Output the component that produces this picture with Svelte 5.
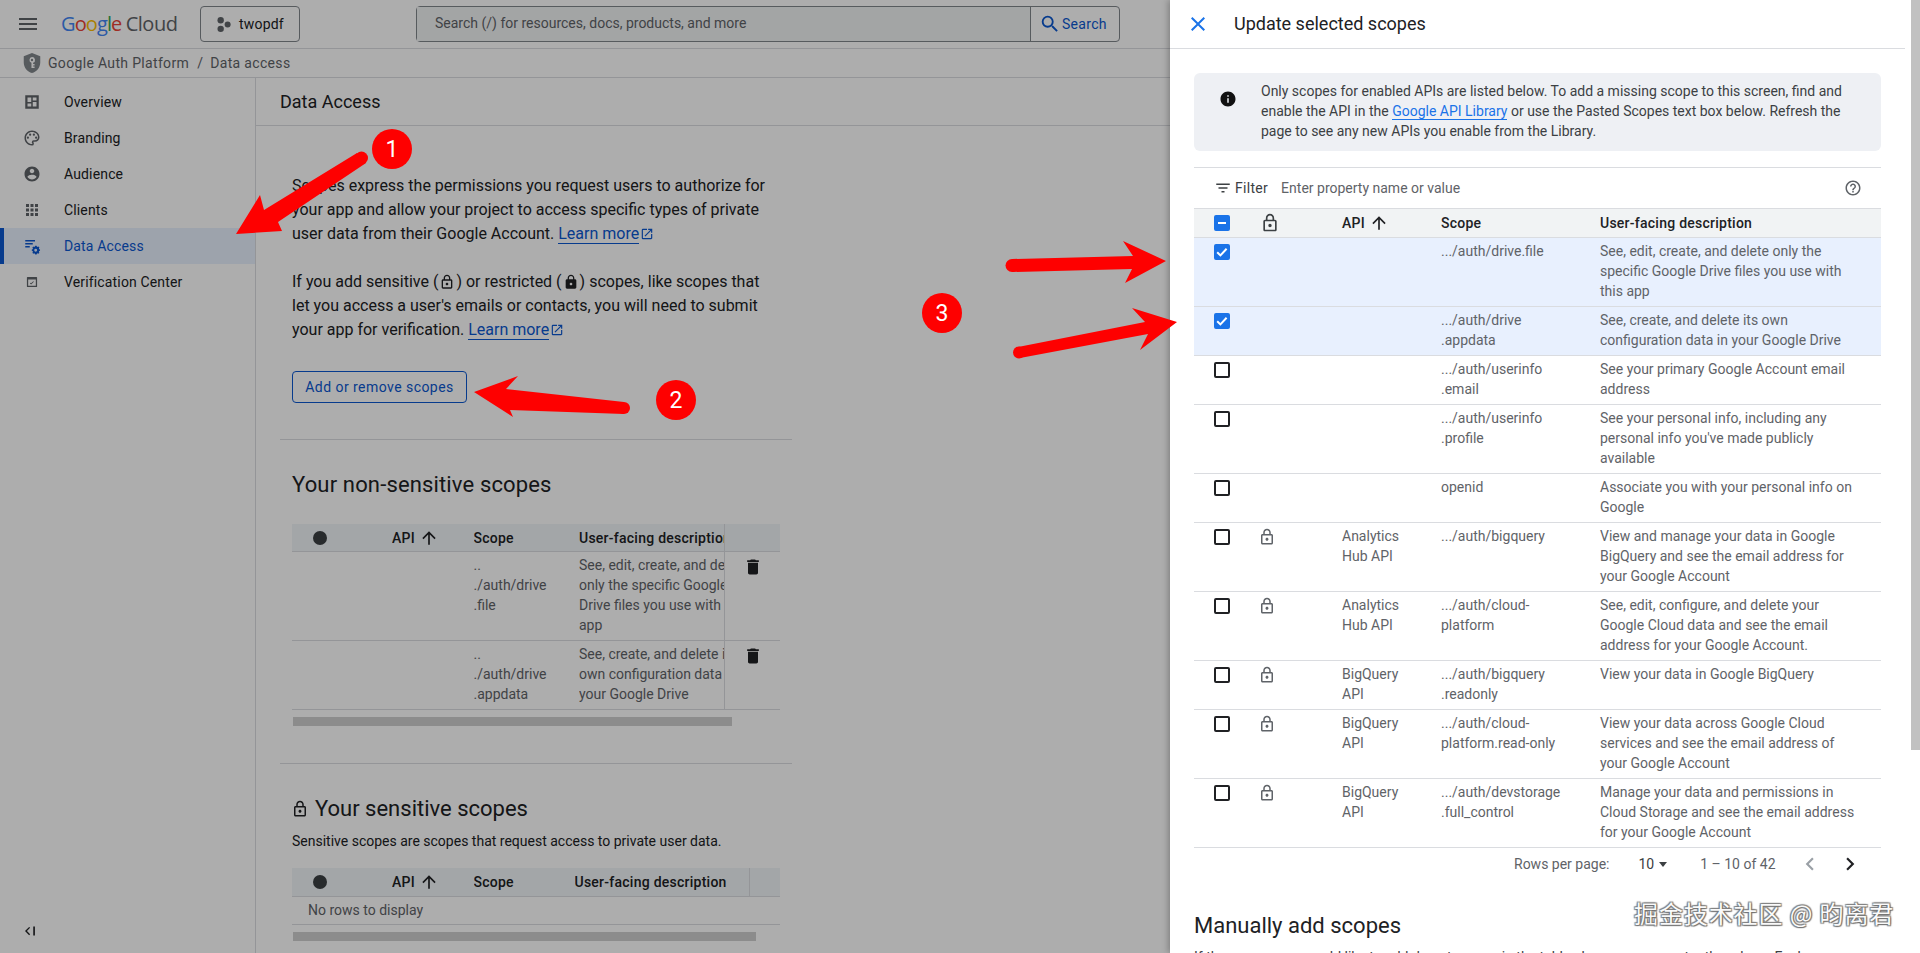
<script>
  const P = {
    menu: 'M3 18h18v-2H3v2zm0-5h18v-2H3v2zm0-7v2h18V6H3z',
    search: 'M15.5 14h-.79l-.28-.27A6.471 6.471 0 0 0 16 9.5 6.5 6.5 0 1 0 9.5 16c1.61 0 3.09-.59 4.23-1.57l.27.28v.79l5 4.99L20.49 19l-4.99-5zm-6 0C7.01 14 5 11.99 5 9.5S7.01 5 9.5 5 14 7.01 14 9.5 11.99 14 9.5 14z',
    close: 'M19 6.41L17.59 5 12 10.59 6.41 5 5 6.41 10.59 12 5 17.59 6.41 19 12 13.41 17.59 19 19 17.59 13.41 12z',
    info: 'M12 2C6.48 2 2 6.48 2 12s4.48 10 10 10 10-4.48 10-10S17.52 2 12 2zm1 15h-2v-6h2v6zm0-8h-2V7h2v2z',
    filter: 'M10 18h4v-2h-4v2zM3 6v2h18V6H3zm3 7h12v-2H6v2z',
    help: 'M11 18h2v-2h-2v2zm1-16C6.48 2 2 6.48 2 12s4.48 10 10 10 10-4.48 10-10S17.52 2 12 2zm0 18c-4.41 0-8-3.59-8-8s3.59-8 8-8 8 3.59 8 8-3.59 8-8 8zm0-14c-2.21 0-4 1.79-4 4h2c0-1.1.9-2 2-2s2 .9 2 2c0 2-3 1.75-3 5h2c0-2.25 3-2.5 3-5 0-2.21-1.79-4-4-4z',
    lock: 'M18 8h-1V6c0-2.76-2.24-5-5-5S7 3.24 7 6v2H6c-1.1 0-2 .9-2 2v10c0 1.1.9 2 2 2h12c1.1 0 2-.9 2-2V10c0-1.1-.9-2-2-2zM9 6c0-1.66 1.34-3 3-3s3 1.34 3 3v2H9V6zm9 14H6V10h12v10zm-6-3c1.1 0 2-.9 2-2s-.9-2-2-2-2 .9-2 2 .9 2 2 2z',
    lockFill: 'M18 8h-1V6c0-2.76-2.24-5-5-5S7 3.24 7 6v2H6c-1.1 0-2 .9-2 2v10c0 1.1.9 2 2 2h12c1.1 0 2-.9 2-2V10c0-1.1-.9-2-2-2zm-6 9c-1.1 0-2-.9-2-2s.9-2 2-2 2 .9 2 2-.9 2-2 2zm3.1-9H8.9V6c0-1.71 1.39-3.1 3.1-3.1 1.71 0 3.1 1.39 3.1 3.1v2z',
    up: 'M4 12l1.41 1.41L11 7.83V20h2V7.83l5.58 5.59L20 12l-8-8-8 8z',
    trash: 'M6 19c0 1.1.9 2 2 2h8c1.1 0 2-.9 2-2V7H6v12zM19 4h-3.5l-1-1h-5l-1 1H5v2h14V4z',
    prev: 'M15.41 7.41L14 6l-6 6 6 6 1.41-1.41L10.83 12z',
    next: 'M10 6L8.59 7.41 13.17 12l-4.58 4.59L10 18l6-6z',
    ext: 'M19 19H5V5h7V3H5a2 2 0 0 0-2 2v14a2 2 0 0 0 2 2h14c1.1 0 2-.9 2-2v-7h-2v7zM14 3v2h3.59l-9.83 9.83 1.41 1.41L19 6.41V10h2V3h-7z',
    overview: 'M3 3h18v18H3V3zm3 3v6h5V6H6zm7 0v4h5V6h-5zm0 6v6h5v-6h-5zM6 14v4h5v-4H6z',
    palette: 'M12 22C6.49 22 2 17.51 2 12S6.49 2 12 2s10 4.04 10 9c0 3.31-2.69 6-6 6h-1.77c-.28 0-.5.22-.5.5 0 .12.05.23.13.33.41.47.64 1.06.64 1.67A2.5 2.5 0 0 1 12 22zm0-18c-4.41 0-8 3.59-8 8s3.59 8 8 8c.28 0 .5-.22.5-.5a.54.54 0 0 0-.14-.35c-.41-.46-.63-1.05-.63-1.65a2.5 2.5 0 0 1 2.5-2.5H16c2.21 0 4-1.79 4-4 0-3.86-3.59-7-8-7zM6.5 10a1.5 1.5 0 1 0 0 3 1.5 1.5 0 0 0 0-3zm3-4a1.5 1.5 0 1 0 0 3 1.5 1.5 0 0 0 0-3zm5 0a1.5 1.5 0 1 0 0 3 1.5 1.5 0 0 0 0-3zm3 4a1.5 1.5 0 1 0 0 3 1.5 1.5 0 0 0 0-3z',
    account: 'M12 2C6.48 2 2 6.48 2 12s4.48 10 10 10 10-4.48 10-10S17.52 2 12 2zm0 3c1.66 0 3 1.34 3 3s-1.34 3-3 3-3-1.34-3-3 1.34-3 3-3zm0 14.2c-2.5 0-4.71-1.28-6-3.22.03-1.99 4-3.08 6-3.08 1.99 0 5.97 1.09 6 3.08-1.29 1.94-3.5 3.22-6 3.22z',
    apps: 'M4 4h4v4H4zm6 0h4v4h-4zm6 0h4v4h-4zM4 10h4v4H4zm6 0h4v4h-4zm6 0h4v4h-4zM4 16h4v4H4zm6 0h4v4h-4zm6 0h4v4h-4z',
    access: 'M3 4h13v2H3zm0 4h10v2H3zm0 4h6v2H3zM17 11.5l1.1.1.4 1.2 1.1.5 1.1-.6 1.2 1.3-.7 1 .3 1.2 1.2.4v1.8l-1.2.4-.3 1.2.7 1-1.2 1.3-1.1-.6-1.1.5-.4 1.2h-1.8l-.4-1.2-1.1-.5-1.1.6-1.2-1.3.7-1-.3-1.2-1.2-.4v-1.8l1.2-.4.3-1.2-.7-1 1.2-1.3 1.1.6 1.1-.5.4-1.2zm-.1 4.3a1.9 1.9 0 1 0 0 3.8 1.9 1.9 0 0 0 0-3.8z',
    verify: 'M5 4h14a1 1 0 0 1 1 1v14a1 1 0 0 1-1 1H5a1 1 0 0 1-1-1V5a1 1 0 0 1 1-1zm1 4v10h12V8H6zm4.6 7.9l-2-2 .9-.9 1.1 1.1 3.4-3.4.9.9-4.3 4.3z',
    shield: 'M12 1L3 4.5v7C3 17 6.8 21.6 12 23c5.2-1.4 9-6 9-11.5v-7L12 1zm0 4.5a3.2 3.2 0 0 1 1.2 6.2V13h1.6v1.6h-1.6v1.2h1.6v1.6h-3.4v-5.7A3.2 3.2 0 0 1 12 5.5zm0 1.9a1.3 1.3 0 1 0 0 2.6 1.3 1.3 0 0 0 0-2.6z',
    collapse: 'M9.5 6.5L4 12l5.5 5.5 1.3-1.3L6.6 12l4.2-4.2zM15 6h2.2v12H15z'
  };

  const nav = [
    { label: 'Overview', icon: 'overview' },
    { label: 'Branding', icon: 'palette' },
    { label: 'Audience', icon: 'account' },
    { label: 'Clients', icon: 'apps' },
    { label: 'Data Access', icon: 'access', active: true },
    { label: 'Verification Center', icon: 'verify', small: true }
  ];

  const scopes = [
    { state: 'on', scope: '.../auth/drive.file', desc: 'See, edit, create, and delete only the\nspecific Google Drive files you use with\nthis app' },
    { state: 'on', scope: '.../auth/drive\n.appdata', desc: 'See, create, and delete its own\nconfiguration data in your Google Drive' },
    { scope: '.../auth/userinfo\n.email', desc: 'See your primary Google Account email\naddress' },
    { scope: '.../auth/userinfo\n.profile', desc: "See your personal info, including any\npersonal info you've made publicly\navailable" },
    { scope: 'openid', desc: 'Associate you with your personal info on\nGoogle' },
    { lock: true, api: 'Analytics\nHub API', scope: '.../auth/bigquery', desc: 'View and manage your data in Google\nBigQuery and see the email address for\nyour Google Account' },
    { lock: true, api: 'Analytics\nHub API', scope: '.../auth/cloud-\nplatform', desc: 'See, edit, configure, and delete your\nGoogle Cloud data and see the email\naddress for your Google Account.' },
    { lock: true, api: 'BigQuery\nAPI', scope: '.../auth/bigquery\n.readonly', desc: 'View your data in Google BigQuery' },
    { lock: true, api: 'BigQuery\nAPI', scope: '.../auth/cloud-\nplatform.read-only', desc: 'View your data across Google Cloud\nservices and see the email address of\nyour Google Account' },
    { lock: true, api: 'BigQuery\nAPI', scope: '.../auth/devstorage\n.full_control', desc: 'Manage your data and permissions in\nCloud Storage and see the email address\nfor your Google Account' }
  ];

  const chosen = [
    { scope: '..\n./auth/drive\n.file', desc: 'See, edit, create, and delete\nonly the specific Google\nDrive files you use with this\napp' },
    { scope: '..\n./auth/drive\n.appdata', desc: 'See, create, and delete its\nown configuration data in\nyour Google Drive' }
  ];

  const arrows = [
    { pts: '236,234 260,195 264,210 357,153 366,163 278,222 282,231', x: 361.5, y: 158, r: 6.5 },
    { pts: '474,392 518,376 506,389 624,402 624,414 510,410 513,417', x: 624, y: 408, r: 6 },
    { pts: '1166,261 1123,241 1133,256 1012,259 1012,272 1132,269 1125,283', x: 1012, y: 265.5, r: 6.5 },
    { pts: '1177,322 1132,308 1145,322 1018,347 1020,358 1148,334 1140,350', x: 1019, y: 352.5, r: 6 }
  ];

  const marks = [
    { n: 1, x: 392, y: 149 },
    { n: 2, x: 676, y: 400 },
    { n: 3, x: 942, y: 313 }
  ];
</script>

{#snippet icon(name, cls)}
  <svg class={cls} viewBox="0 0 24 24" aria-hidden="true"><path d={P[name]} /></svg>
{/snippet}

{#snippet leftHead(wide)}
  <div class="lrow lhead" class:wide>
    <span class="dot"></span>
    <span class="lapi">API {@render icon('up', 'sort')}</span>
    <span class="lscope">Scope</span>
    <span class="ldesc">User-facing description</span>
    <span class="lact"></span>
  </div>
{/snippet}

<div class="page">
  <header class="top">
    {@render icon('menu', 'burger')}
    <div class="logo">
      <span class="g1">G</span><span class="g2">o</span><span class="g3">o</span><span class="g1">g</span><span class="g4">l</span><span class="g2">e</span>
      <span class="cloud">Cloud</span>
    </div>
    <button class="project">
      <svg class="dots" viewBox="0 0 16 16" aria-hidden="true"><circle cx="5" cy="3.4" r="3.4" /><circle cx="5" cy="12.6" r="3.4" /><circle cx="12.4" cy="8" r="3.2" /></svg>
      twopdf
    </button>
    <div class="search">
      <span class="sinput">Search (/) for resources, docs, products, and more</span>
      <span class="sbtn">{@render icon('search', 'sicon')}Search</span>
    </div>
  </header>

  <div class="crumb">
    {@render icon('shield', 'shield')}
    <span>Google Auth Platform</span>
    <span class="sep">/</span>
    <span>Data access</span>
  </div>

  <div class="body">
    <nav class="side">
      {#each nav as n}
        <div class="item" class:active={n.active}>
          {@render icon(n.icon, n.small ? 'nicon small' : 'nicon')}
          <span>{n.label}</span>
        </div>
      {/each}
      {@render icon('collapse', 'collapse')}
    </nav>

    <main class="main">
      <h1 class="mtitle">Data Access</h1>
      <div class="content">
        <p class="para">Scopes express the permissions you request users to authorize for<br />your app and allow your project to access specific types of private<br />user data from their Google Account. <a href="#a">Learn more</a>{@render icon('ext', 'ext')}</p>
        <p class="para second">If you add sensitive ({@render icon('lock', 'inl')}) or restricted ({@render icon('lockFill', 'inl')}) scopes, like scopes that<br />let you access a user's emails or contacts, you will need to submit<br />your app for verification. <a href="#a">Learn more</a>{@render icon('ext', 'ext')}</p>
        <button class="addbtn">Add or remove scopes</button>
        <hr class="rule r1" />
        <h2 class="h2">Your non-sensitive scopes</h2>
        <div class="ltable">
          {@render leftHead(false)}
          {#each chosen as c}
            <div class="lrow">
              <span></span>
              <span></span>
              <span class="lscope pre">{c.scope}</span>
              <span class="ldesc pre">{c.desc}</span>
              <span class="lact">{@render icon('trash', 'trash')}</span>
            </div>
          {/each}
        </div>
        <div class="hscroll s1"></div>
        <hr class="rule r2" />
        <h2 class="h2 locked">{@render icon('lock', 'hlock')}Your sensitive scopes</h2>
        <p class="sub">Sensitive scopes are scopes that request access to private user data.</p>
        <div class="ltable">
          {@render leftHead(true)}
          <div class="norows">No rows to display</div>
        </div>
        <div class="hscroll s2"></div>
      </div>
    </main>
  </div>
</div>

<div class="scrim"></div>

<aside class="panel">
  <div class="pmain">
    <div class="phead">
      {@render icon('close', 'pclose')}
      <span>Update selected scopes</span>
    </div>
    <div class="pbody">
      <div class="note">
        {@render icon('info', 'ninfo')}
        <p>Only scopes for enabled APIs are listed below. To add a missing scope to this screen, find and<br />enable the API in the <a href="#a">Google API Library</a> or use the Pasted Scopes text box below. Refresh the<br />page to see any new APIs you enable from the Library.</p>
      </div>
      <div class="filter">
        {@render icon('filter', 'ficon')}
        <span class="flabel">Filter</span>
        <span class="fhint">Enter property name or value</span>
        {@render icon('help', 'fhelp')}
      </div>
      <div class="grid ghead">
        <span class="cb mixed"></span>
        <span class="gl">{@render icon('lock', 'glock head')}</span>
        <span class="api">API {@render icon('up', 'sort')}</span>
        <span>Scope</span>
        <span>User-facing description</span>
      </div>
      {#each scopes as r}
        <div class="grid grow" class:sel={r.state === 'on'}>
          <span class="cb" class:on={r.state === 'on'}>
            {#if r.state === 'on'}
              <svg viewBox="0 0 16 16" aria-hidden="true"><path d="M3.2 8.2l3.2 3.2 6.2-6.6" /></svg>
            {/if}
          </span>
          <span class="gl">{#if r.lock}{@render icon('lock', 'glock')}{/if}</span>
          <span class="pre">{r.api ?? ''}</span>
          <span class="pre">{r.scope}</span>
          <span class="pre">{r.desc}</span>
        </div>
      {/each}
      <div class="pager">
        <span class="rpp">Rows per page:</span>
        <span class="cnt">10</span>
        <span class="caret"></span>
        <span class="range">1 – 10 of 42</span>
        {@render icon('prev', 'chev off')}
        {@render icon('next', 'chev')}
      </div>
      <h2 class="manual">Manually add scopes</h2>
      <p class="cut">If the scopes you would like to add do not appear in the table above, you can enter them here. Each</p>
    </div>
  </div>
  <div class="vscroll"><div class="thumb"></div></div>
  <div class="wm">掘金技术社区 @ 昀离君</div>
</aside>

<svg class="marks" viewBox="0 0 1920 953" aria-hidden="true">
  {#each arrows as a}
    <polygon points={a.pts} />
    <circle cx={a.x} cy={a.y} r={a.r} />
  {/each}
  {#each marks as m}
    <circle cx={m.x} cy={m.y} r="20" />
    <text x={m.x} y={m.y + 8}>{m.n}</text>
  {/each}
</svg>

<style>
  :global(body) { margin: 0; background: #fff; }
  :global(#app) { position: relative; width: 1920px; height: 953px; overflow: hidden; font-family: Roboto, "Liberation Sans", sans-serif; color: #202124; }
  svg { fill: currentColor; display: block; }
  p, h1, h2 { margin: 0; font-weight: 400; }
  a { color: #0b57d0; text-decoration: none; border-bottom: 1px solid #0b57d0; }
  button { font-family: inherit; background: none; cursor: pointer; }
  .pre { white-space: pre; }

  .page { width: 1920px; height: 953px; display: flex; flex-direction: column; background: #fff; }
  .top { height: 48px; flex: none; display: flex; align-items: center; border-bottom: 1px solid #dadce0; box-sizing: content-box; }
  .burger { width: 24px; height: 24px; margin-left: 16px; color: #5f6368; flex: none; }
  .logo { width: 123px; flex: none; margin-left: 21px; font: 20px/1 "Open Sans", Roboto, sans-serif; letter-spacing: -.9px; white-space: nowrap; color: #5f6368; }
  .g1 { color: #4285f4; } .g2 { color: #ea4335; } .g3 { color: #fbbc04; } .g4 { color: #34a853; }
  .cloud { letter-spacing: -.5px; }
  .project { width: 100px; height: 36px; flex: none; margin-left: 16px; display: flex; align-items: center; gap: 8px; padding: 0 0 0 15px; border: 1px solid #80868b; border-radius: 4px; font-size: 14px; color: #202124; letter-spacing: .2px; box-sizing: border-box; }
  .dots { width: 15px; height: 15px; color: #5f6368; }
  .search { width: 704px; height: 36px; margin-left: 116px; display: flex; border: 1px solid #80868b; border-radius: 4px; box-sizing: border-box; }
  .sinput { flex: 1; background: #f1f3f4; padding-left: 18px; font-size: 14px; line-height: 32px; color: #5f6368; border-right: 1px solid #80868b; }
  .sbtn { width: 88px; display: flex; align-items: center; gap: 1px; padding-left: 8px; box-sizing: border-box; color: #0b57d0; font-size: 14px; letter-spacing: .3px; }
  .sicon { width: 22px; height: 22px; }

  .crumb { height: 28px; flex: none; display: flex; align-items: center; padding-left: 21px; gap: 4px; font-size: 14px; letter-spacing: .33px; color: #5f6368; border-bottom: 1px solid #dadce0; background: #fff; }
  .shield { width: 22px; height: 22px; color: #80868b; margin-right: 1px; }
  .sep { margin: 0 3px 0 4px; }

  .body { flex: 1; display: flex; min-height: 0; }
  .side { width: 255px; flex: none; position: relative; padding-top: 6px; border-right: 1px solid #dadce0; }
  .item { height: 36px; display: flex; align-items: center; font-size: 14px; letter-spacing: .15px; color: #202124; }
  .nicon { width: 18px; height: 18px; margin: 0 23px 0 23px; color: #5f6368; }
  .nicon.small { transform: scale(.85); }
  .item.active { background: #e8f0fe; color: #0b57d0; box-shadow: inset 4px 0 0 #0b57d0; }
  .item.active .nicon { color: #0b57d0; }
  .collapse { position: absolute; left: 22px; bottom: 13px; width: 18px; height: 18px; color: #202124; }

  .main { flex: 1; min-width: 0; }
  .mtitle { height: 47px; padding-left: 24px; font-size: 18px; line-height: 48px; border-bottom: 1px solid #dadce0; }
  .content { width: 512px; margin-left: 24px; }
  .para { margin: 48px 0 0 12px; font-size: 16px; line-height: 24px; white-space: nowrap; }
  .para.second { margin-top: 24px; }
  .para a { color: #0b57d0; }
  .ext { display: inline-block; width: 14px; height: 14px; margin-left: 1px; vertical-align: -2px; color: #0b57d0; }
  .inl { display: inline-block; width: 16px; height: 16px; margin: 0 1px; vertical-align: -3px; }
  .addbtn { display: block; width: 175px; height: 32px; margin: 29px 0 0 12px; padding: 0; border: 1px solid #0b57d0; border-radius: 4px; color: #0b57d0; font-size: 14px; letter-spacing: .45px; }
  .rule { margin: 0; border: 0; border-top: 1px solid #dadce0; }
  .r1 { margin-top: 36px; }
  .r2 { margin-top: 37px; }
  .h2 { margin: 30px 0 0 12px; font-size: 22px; line-height: 30px; letter-spacing: .15px; }
  .h2.locked { display: flex; align-items: center; margin-top: 30px; letter-spacing: 0; }
  .hlock { width: 18px; height: 18px; margin: 0 6px 0 -1px; }
  .sub { margin: 7px 0 0 12px; font-size: 14px; line-height: 20px; }
  .ltable { width: 488px; margin: 24px 0 0 12px; font-size: 14px; color: #5f6368; }
  .sub + .ltable { margin-top: 17px; }
  .lrow { display: grid; grid-template-columns: 100px 81.5px 105.5px 145px 56px; line-height: 20px; padding-top: 3px; padding-bottom: 5px; border-bottom: 1px solid #dadce0; }
  .lrow > span { min-width: 0; overflow: hidden; }
  .lhead { background: #f0f5f8; color: #202124; font-weight: 500; letter-spacing: .25px; height: 19px; padding-top: 4px; padding-bottom: 4px; align-items: center; white-space: nowrap; }
  .lhead.wide { grid-template-columns: 100px 81.5px 101px 174px 31.5px; height: 20px; }
  .dot { width: 14px; height: 14px; border-radius: 50%; background: #3c4043; margin-left: 21px; }
  .lapi { display: flex; align-items: center; gap: 2px; }
  .sort { width: 20px; height: 20px; color: #202124; margin-left: 2px; }
  .lact { align-self: stretch; margin-top: -3px; margin-bottom: -6px; padding-top: 5px; border-left: 1px solid #dadce0; display: flex; justify-content: center; }
  .lhead .lact { margin-top: -4px; margin-bottom: -5px; }
  .trash { width: 20px; height: 20px; color: #202124; margin-left: 0; }
  .norows { padding: 3px 0 4px 16px; height: 20px; line-height: 20px; border-bottom: 1px solid #dadce0; }
  .hscroll { height: 9px; margin: 7px 0 0 13px; background: #cfcfcf; }
  .s1 { width: 439px; }
  .s2 { width: 463px; }

  .scrim { position: absolute; inset: 0; background: rgba(0, 0, 0, .32); }

  .panel { position: absolute; top: 0; right: 0; bottom: 0; width: 750px; display: flex; background: #fff; box-shadow: -2px 0 6px rgba(0, 0, 0, .25); }
  .pmain { width: 735px; flex: none; }
  .phead { height: 47px; padding-bottom: 1px; display: flex; align-items: center; border-bottom: 1px solid #dadce0; font-size: 18px; }
  .pclose { width: 24px; height: 24px; margin: 0 24px 0 16px; color: #1a73e8; }
  .pbody { padding: 24px 24px 0; }
  .note { height: 78px; display: flex; background: #eef0f4; border-radius: 6px; }
  .ninfo { width: 18px; height: 18px; margin: 17px 24px 0 25px; color: #111; }
  .note p { font-size: 14px; line-height: 20px; padding-top: 8px; white-space: nowrap; color: #3c4043; }
  .note a { color: #1a73e8; border-color: #1a73e8; }
  .filter { height: 40px; margin-top: 16px; display: flex; align-items: center; border-top: 1px solid #dadce0; font-size: 14px; }
  .ficon { width: 18px; height: 18px; margin-left: 20px; color: #3c4043; }
  .flabel { margin-left: 3px; color: #3c4043; letter-spacing: .3px; }
  .fhint { margin-left: 13px; color: #5f6368; flex: 1; }
  .fhelp { width: 18px; height: 18px; margin-right: 19px; color: #5f6368; }
  .grid { display: grid; grid-template-columns: 64px 84px 99px 159px 1fr; font-size: 14px; line-height: 20px; padding: 3px 0 5px; border-bottom: 1px solid #dadce0; color: #5f6368; }
  .ghead { height: 20px; padding: 4px 0; background: #f1f3f4; color: #202124; font-weight: 500; letter-spacing: .25px; border-top: 1px solid #dadce0; align-items: center; }
  .grow.sel { background: #e8f0fe; }
  .cb { display: block; box-sizing: border-box; width: 16px; height: 16px; margin: 3px 0 0 20px; border: 2px solid #202124; border-radius: 2px; }
  .cb.on, .cb.mixed { background: #1a73e8; border-color: #1a73e8; position: relative; }
  .cb.on svg { position: absolute; left: -2px; top: -2px; width: 16px; height: 16px; fill: none; stroke: #fff; stroke-width: 2; }
  .cb.mixed { margin-top: 0; }
  .cb.mixed::after { content: ""; position: absolute; left: 2px; right: 2px; top: 4.5px; height: 2px; background: #fff; }
  .gl { display: block; }
  .glock { width: 18px; height: 18px; margin-left: 0; color: #5f6368; margin-top: 2px; }
  .glock.head { width: 20px; height: 20px; margin: 0 0 0 2px; color: #3c4043; }
  .api { display: flex; align-items: center; gap: 2px; }
  .pager { height: 32px; display: flex; align-items: center; font-size: 14px; color: #5f6368; }
  .rpp { margin-left: 320px; }
  .cnt { margin-left: 29px; color: #3c4043; }
  .caret { margin-left: 5px; border: 4.5px solid transparent; border-top: 5px solid #3c4043; border-bottom: 0; }
  .range { margin-left: 33px; width: 97px; }
  .chev { width: 26px; height: 26px; color: #202124; }
  .chev.off { color: #9aa0a6; margin-right: 14px; }
  .manual { margin-top: 31px; font-size: 22px; line-height: 30px; }
  .cut { margin-top: 6px; font-size: 14px; line-height: 20px; color: #3c4043; white-space: nowrap; }
  .vscroll { position: absolute; top: 0; right: 0; bottom: 0; width: 9px; background: #fff; }
  .thumb { height: 750px; background: #c1c1c1; }
  .wm { position: absolute; left: 464px; top: 896px; font: 24px/34px "Noto Sans CJK SC", sans-serif; letter-spacing: .9px; color: #fafafa; white-space: nowrap; text-shadow: 0 0 1px #555, 1px 1px 1px #777, -1px -1px 1px #888, 1px -1px 1px #888, -1px 1px 1px #888; }

  .marks { position: absolute; inset: 0; width: 1920px; height: 953px; fill: #fe0000; pointer-events: none; }
  .marks text { fill: #fff; font: 23px Roboto, sans-serif; text-anchor: middle; }
</style>
